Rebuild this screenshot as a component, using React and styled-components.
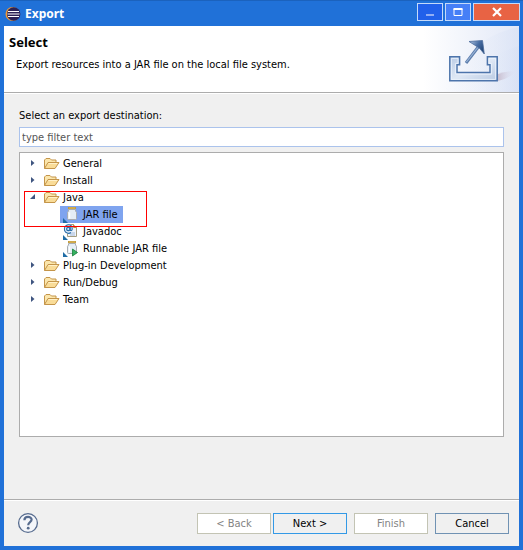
import React from "react";
import styled, { createGlobalStyle } from "styled-components";

const tree = [
  { name: "General" },
  { name: "Install" },
  {
    name: "Java",
    open: true,
    children: [
      { name: "JAR file", icon: "jar", selected: true },
      { name: "Javadoc", icon: "doc" },
      { name: "Runnable JAR file", icon: "run" },
    ],
  },
  { name: "Plug-in Development" },
  { name: "Run/Debug" },
  { name: "Team" },
];

const EclipseIcon = () => (
  <svg width="16" height="16" viewBox="0 0 16 16">
    <circle cx="7.5" cy="8" r="7" fill="#f09a35" />
    <circle cx="8.7" cy="8" r="6.7" fill="#2c2255" />
    <path d="M3 5.5h11M2.5 8h12M3 10.5h11" stroke="#fff" strokeWidth="1.2" />
  </svg>
);

const BannerArt = () => (
  <svg width="120" height="66" viewBox="0 0 120 66">
    <defs>
      <linearGradient id="sky" x1="0" y1="0" x2="1" y2="0">
        <stop offset="0.2" stopColor="#fff" />
        <stop offset="1" stopColor="#e2e8f7" />
      </linearGradient>
      <linearGradient id="swoosh" x1="0" y1="0" x2="1" y2="0">
        <stop offset="0" stopColor="#fff" stopOpacity="0" />
        <stop offset="1" stopColor="#d5dff4" />
      </linearGradient>
      <linearGradient id="tray" x1="0" y1="0" x2="1" y2="1">
        <stop offset="0" stopColor="#b9cbe5" />
        <stop offset="0.5" stopColor="#dfe8f5" />
        <stop offset="1" stopColor="#b9c9e2" />
      </linearGradient>
      <linearGradient id="shade" x1="0" y1="0" x2="1" y2="0">
        <stop offset="0" stopColor="#c9bfd0" />
        <stop offset="1" stopColor="#dfe3f4" stopOpacity="0" />
      </linearGradient>
      <linearGradient id="head" x1="0" y1="0" x2="1" y2="0.6">
        <stop offset="0" stopColor="#b5c8e2" />
        <stop offset="0.55" stopColor="#4a6fa5" />
        <stop offset="1" stopColor="#244778" />
      </linearGradient>
    </defs>
    <rect width="120" height="66" fill="url(#sky)" />
    <path d="M30 66C62 30 84 8 120 1v65z" fill="url(#swoosh)" opacity="0.5" />
    <path d="M56 66C72 44 92 28 120 20v46z" fill="url(#swoosh)" opacity="0.4" />
    <path d="M99 55V48Q108 45 117 45 110 53 99 55z" fill="url(#shade)" />
    <path
      d="M50.8 30.8h9.8v8h-2.6v7.8h33v-7.8h-2.6v-8h9.8v24h-47.4z"
      fill="url(#tray)"
      stroke="#4d74ab"
      strokeWidth="1.5"
    />
    <path
      d="M52.4 53.4V32.4h6.6v5h-2.4v10.8h35.8V37.4H90v-5h6.6v21z"
      fill="none"
      stroke="#eef4fc"
      strokeWidth="1"
      opacity="0.8"
    />
    <path d="M67 37L80 20" stroke="#5c7dac" strokeWidth="3" />
    <path d="M67.4 36L80 20" stroke="#9ab3d6" strokeWidth="1.2" />
    <path d="M70 15.5l13.5-1 1.8 13.5-5-6z" fill="url(#head)" stroke="#4c6c9c" strokeWidth="0.8" />
  </svg>
);

const FolderIcon = () => (
  <svg width="16" height="16" viewBox="0 0 16 16">
    <path d="M0.5 12.5V4L2 2.5h4L7.5 4H12v2.5" fill="#fbe6ac" stroke="#c4954a" />
    <path d="M0.5 12.5L4 6.5h11L11 12.5z" fill="#f9dc98" stroke="#c4954a" strokeLinejoin="round" />
    <path d="M4.5 7.5h8.7" stroke="#fff1c9" />
  </svg>
);

const Jar = () => (
  <>
    <path d="M6 1h8" stroke="#b8902f" strokeWidth="2" />
    <path d="M6.5 1h7" stroke="#f3d27a" strokeWidth="0.8" />
    <path
      d="M6.5 2.5h7v1.5l1 1.3v6.2q0 1-1 1h-7q-1 0-1-1V5.3l1-1.3z"
      fill="#e4edf5"
      stroke="#a8acb0"
    />
    <path d="M7.5 5.5v6" stroke="#fff" strokeWidth="1.4" />
  </>
);

const ItemIcon = ({ kind }) => (
  <svg width="18" height="16" viewBox="0 0 18 16">
    {kind === "doc" ? (
      <>
        <path d="M5.5 0.5h6l3 3v9h-9z" fill="#eef4fc" stroke="#a49c80" />
        <path d="M11.5 0.5v3h3" fill="#f5dfa3" stroke="#b89545" />
        <path d="M8 9h5M8 11h5" stroke="#8fa9cf" strokeWidth="0.8" />
        <circle cx="6.5" cy="5" r="4.8" fill="#dbe9f8" />
        <circle cx="6.3" cy="5" r="1.7" fill="none" stroke="#2a6da8" strokeWidth="1.2" />
        <path
          d="M8.2 3v3.2q1.9 1 2-1.4C10.200 2 8.500 0.700 6.500 0.700a4.200 4.300 0 1 0 2.500 7.800"
          fill="none"
          stroke="#2a6da8"
          strokeWidth="1.1"
        />
      </>
    ) : (
      <Jar />
    )}
    <path d="M1 11v5h5z" fill="#1f6ca5" />
    {kind === "run" && <path d="M10.5 8l5 3.5-5 3.5z" fill="#35b060" stroke="#17803a" strokeWidth="0.8" />}
  </svg>
);

const Arrow = ({ open }) => (
  <svg width="6" height="8" viewBox="0 0 6 8">
    <path d={open ? "M5 0v5H0z" : "M1 0v6L4.5 3z"} fill="#3f5580" />
  </svg>
);

const HelpIcon = () => (
  <svg width="22" height="22" viewBox="0 0 22 22">
    <circle cx="11" cy="11" r="9.4" fill="#f4f6fa" stroke="#566b8e" strokeWidth="1.3" />
    <path
      d="M7.4 8.2C7.4 3.8 14.6 4 14.6 7.6 14.6 10.2 11.2 10 11.2 13.2"
      fill="none"
      stroke="#566b8e"
      strokeWidth="2.2"
    />
    <circle cx="11.2" cy="16.2" r="1.4" fill="#566b8e" />
  </svg>
);

const App = () => {
  const [filter, setFilter] = React.useState("");

  return (
    <>
      <GlobalStyle />
      <Window>
        <TitleBar>
          <EclipseIcon />
          <Title>Export</Title>
          <Control aria-label="Minimize" $color="#2160ea">
            <svg width="10" height="10" viewBox="0 0 10 10">
              <path d="M1 8h8" stroke="#92adf4" strokeWidth="2" />
            </svg>
          </Control>
          <Control aria-label="Maximize" $color="#467ff7">
            <svg width="10" height="10" viewBox="0 0 10 10">
              <path d="M1 2h8v6.5H1z" fill="none" stroke="#fff" />
              <path d="M0.5 2h9" stroke="#fff" strokeWidth="2" />
            </svg>
          </Control>
          <Control aria-label="Close" $color="#e86344" $wide>
            <svg width="10" height="10" viewBox="0 0 10 10">
              <path d="M1 1l8 8M9 1L1 9" stroke="#fff" strokeWidth="2.2" />
            </svg>
          </Control>
        </TitleBar>
        <Banner>
          <BannerText>
            <Heading>Select</Heading>
            <Message>Export resources into a JAR file on the local file system.</Message>
          </BannerText>
          <BannerArt />
        </Banner>
        <Content>
          <Label htmlFor="filter">Select an export destination:</Label>
          <Filter
            id="filter"
            placeholder="type filter text"
            value={filter}
            onChange={(e) => setFilter(e.target.value)}
          />
          <Tree>
            {tree.map((node) => (
              <li key={node.name}>
                <Row>
                  <Arrow open={node.open} />
                  <FolderIcon />
                  <span>{node.name}</span>
                </Row>
                {node.children && (
                  <SubTree>
                    {node.children.map((item) => (
                      <Item key={item.name} $selected={item.selected}>
                        <ItemIcon kind={item.icon} />
                        <span>{item.name}</span>
                      </Item>
                    ))}
                  </SubTree>
                )}
              </li>
            ))}
            <Highlight />
          </Tree>
        </Content>
        <Footer>
          <Help aria-label="Help">
            <HelpIcon />
          </Help>
          <Steps>
            <Button disabled>&lt; Back</Button>
            <Button $primary>Next &gt;</Button>
          </Steps>
          <Button disabled>Finish</Button>
          <Button>Cancel</Button>
        </Footer>
      </Window>
    </>
  );
};

const GlobalStyle = createGlobalStyle`
  * {
    box-sizing: border-box;
  }
  body {
    margin: 0;
  }
  body, button, input {
    font-family: "DejaVu Sans Condensed", "DejaVu Sans", sans-serif;
    font-size: 11px;
    color: #000;
  }
  svg {
    display: block;
    flex: none;
  }
`;

const Window = styled.div`
  display: flex;
  flex-direction: column;
  min-height: 100vh;
  padding: 0 4px 4px;
  background: #2071d8;
  border-top: 1px solid #1b62bd;
`;

const TitleBar = styled.div`
  display: flex;
  align-items: center;
  gap: 2px;
  height: 25px;
  margin-right: -1px;
  padding-left: 1px;
`;

const Title = styled.h1`
  flex: 1;
  margin: 0;
  padding-left: 2px;
  font-family: "Noto Sans", sans-serif;
  font-size: 12px;
  line-height: 16px;
  font-weight: bold;
  color: #fff;
`;

const Control = styled.button`
  display: flex;
  align-items: center;
  justify-content: center;
  width: ${(props) => (props.$wide ? "47px" : "26px")};
  height: 18px;
  margin-bottom: 3px;
  padding: 0;
  border: 1px solid #c5dafa;
  background: ${(props) => props.$color};
`;

const Banner = styled.div`
  display: flex;
  justify-content: space-between;
  background: #fff;
  border-bottom: 1px solid #acacac;
`;

const BannerText = styled.div`
  padding: 7px 0 0 5px;
`;

const Heading = styled.h2`
  margin: 0;
  font-family: "Noto Sans", sans-serif;
  font-size: 13px;
  line-height: 18px;
`;

const Message = styled.p`
  margin: 6px 0 0 7px;
  line-height: 16px;
`;

const Content = styled.div`
  display: flex;
  flex-direction: column;
  flex: 1;
  padding: 14px 15px 62px;
  background: #f0f0f0;
  border-top: 1px solid #fff;
`;

const Label = styled.label`
  line-height: 16px;
`;

const Filter = styled.input`
  height: 20px;
  margin: 3px 0 5px;
  padding: 0 2px;
  border: 1px solid #abc3ec;
  background: #fff;
  outline: none;

  &::placeholder {
    color: #555;
    opacity: 1;
  }
`;

const Tree = styled.ul`
  position: relative;
  flex: 1;
  margin: 0;
  padding: 2px 0 0 10px;
  border: 1px solid #acacac;
  background: #fff;
  list-style: none;
`;

const Row = styled.div`
  display: flex;
  align-items: center;
  gap: 3px;
  height: 17px;

  > svg:first-child {
    margin-right: 5px;
  }
`;

const SubTree = styled.ul`
  display: flex;
  flex-direction: column;
  align-items: flex-start;
  margin: 0;
  padding: 0 0 0 30px;
  list-style: none;
`;

const Item = styled.li`
  display: flex;
  align-items: center;
  gap: 3px;
  height: 17px;
  padding: 0 5px 0 2px;
  background: ${(props) => (props.$selected ? "#7fa4ef" : "transparent")};
`;

/* red frame drawn over the Java branch */
const Highlight = styled.li`
  position: absolute;
  top: 38px;
  left: 4px;
  width: 123px;
  height: 36px;
  border: 1px solid #f00;
  pointer-events: none;
`;

const Footer = styled.div`
  display: flex;
  align-items: center;
  gap: 7px;
  padding: 12px 10px 12px 13px;
  background: #f0f0f0;
  border-top: 1px solid #acacac;
  box-shadow: inset 0 1px #fff;
`;

const Help = styled.button`
  margin-right: auto;
  padding: 0;
  border: 0;
  background: none;
`;

const Steps = styled.div`
  display: flex;
  gap: 2px;
`;

const Button = styled.button`
  width: 74px;
  height: 21px;
  padding: 0;
  border: 1px solid ${(props) => (props.$primary ? "#3399e6" : "#7092b3")};
  background: #f0f0f0;

  &:disabled {
    border-color: #c3c4b4;
    background: #fff;
    color: #838383;
  }
`;

export default App;
